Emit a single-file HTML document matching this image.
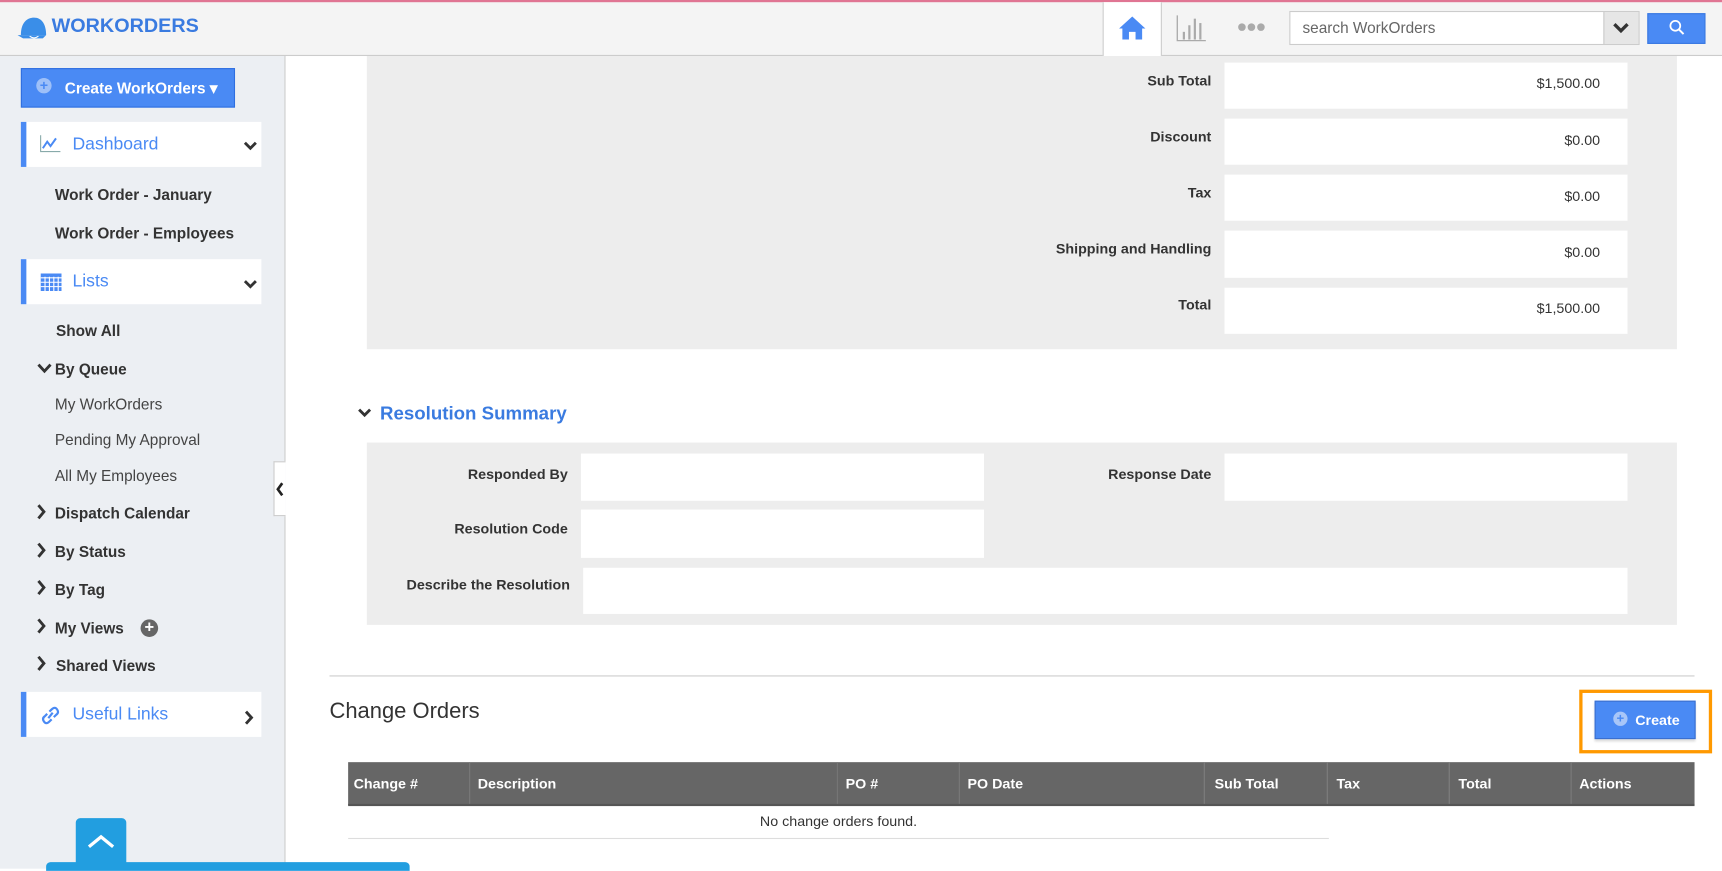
<!DOCTYPE html>
<html><head><meta charset="utf-8"><style>
*{box-sizing:border-box;margin:0;padding:0}
html,body{width:1722px;height:869px;overflow:hidden;background:#fff;font-family:"Liberation Sans",Arial,sans-serif}
#w{position:absolute;left:0;top:0;width:1568px;height:791px;transform:scale(1.09821);transform-origin:0 0}
.a{position:absolute}
.hdr{left:0;top:0;width:1568px;height:51px;background:#f4f4f4;border-top:2px solid #e07593;border-bottom:1px solid #ccc}
.side{left:0;top:51px;width:260px;height:740px;background:#eceff3;border-right:1px solid #ccc}
.nav{left:19px;width:219px;height:41px;background:#fff;border-left:5px solid #4a8af4;color:#4a8af4;font-size:16px}
.nav span{position:absolute;left:42px;top:12px}
.it{left:50px;font-size:14px;font-weight:bold;color:#333}
.it.n{font-weight:normal;color:#444}
.chev{font-size:14px;font-weight:bold;color:#333}
.lbl{font-size:13px;font-weight:bold;color:#333;text-align:right}
.inp{background:#fff}
.val{font-size:13px;color:#333;text-align:right}
.th{top:694px;height:39px;background:#666;color:#fff;font-weight:bold;font-size:13px;padding:12px 0 0 5px;border-right:1px solid #777}
</style></head><body><div id="w">
<div class="a hdr"></div>
<svg class="a" style="left:15px;top:14px" width="30" height="24" viewBox="0 0 30 24"><path d="M4 18 C4 6 10 2 16 2 C23 2 27 8 27 18 Z" fill="#3a8ee8"/><path d="M1 18 L27 18 L24 21 L6 21 Z" fill="#3a8ee8"/><path d="M12 19 q4 3 8 0" stroke="#fff" fill="none"/></svg>
<div class="a" style="left:47px;top:13px;font-size:18px;font-weight:bold;color:#3a7be0">WORKORDERS</div>
<div class="a" style="left:1004px;top:2px;width:54px;height:49px;background:#fff;border-left:1px solid #ccc;border-right:1px solid #ccc"></div>
<svg class="a" style="left:1018px;top:13px" width="26" height="24" viewBox="0 0 26 24"><path d="M13 2 L1 13 L4 13 L4 23 L10 23 L10 16 L16 16 L16 23 L22 23 L22 13 L25 13 Z" fill="#4a8af4"/></svg>
<svg class="a" style="left:1071px;top:13px" width="28" height="25" viewBox="0 0 28 25"><path d="M1 1 V24 H27" stroke="#aaa" fill="none" stroke-width="1.2"/><rect x="6" y="16" width="2" height="7" fill="#aaa"/><rect x="11" y="10" width="2" height="13" fill="#aaa"/><rect x="16" y="4" width="2" height="19" fill="#aaa"/><rect x="21" y="8" width="2" height="15" fill="#aaa"/></svg>
<div class="a" style="left:1126px;top:16px;font-size:16px;color:#aaa;letter-spacing:-1px">●●●</div>
<div class="a" style="left:1174px;top:10px;width:319px;height:31px;background:#fff;border:1px solid #ccc"></div>
<div class="a" style="left:1186px;top:17px;font-size:14px;color:#666">search WorkOrders</div>
<div class="a" style="left:1460px;top:11px;width:32px;height:29px;background:#e6e6e6;border-left:1px solid #ccc;text-align:center;padding-top:5px;font-size:13px;font-weight:bold;color:#333">&#x2335;</div>
<svg class="a" style="left:1468px;top:20px" width="16" height="11" viewBox="0 0 16 11"><path d="M2 2 L8 8 L14 2" stroke="#333" stroke-width="3" fill="none"/></svg>
<div class="a" style="left:1460px;top:11px;width:32px;height:29px;background:#e6e6e6;border-left:1px solid #ccc"></div>
<svg class="a" style="left:1468px;top:20px" width="16" height="11" viewBox="0 0 16 11"><path d="M2 2 L8 8 L14 2" stroke="#333" stroke-width="3" fill="none"/></svg>
<div class="a" style="left:1500px;top:12px;width:53px;height:28px;background:#4a8af4;border:1px solid #3a78e0"></div>
<svg class="a" style="left:1519px;top:17px" width="16" height="16" viewBox="0 0 16 16"><circle cx="6.5" cy="6.5" r="4.5" stroke="#fff" stroke-width="1.6" fill="none"/><path d="M10 10 L14 14" stroke="#fff" stroke-width="1.8"/></svg>

<div class="a side"></div>
<div class="a" style="left:19px;top:62px;width:195px;height:36px;background:#4a8af4;border:1px solid #2f6fe0"></div>
<div class="a" style="left:33px;top:71px;width:14px;height:14px;border-radius:50%;background:#9ec0f8;color:#4a8af4;font-size:13px;font-weight:bold;text-align:center;line-height:14px">+</div>
<div class="a" style="left:59px;top:72px;font-size:14px;font-weight:bold;color:#fff">Create WorkOrders &#9662;</div>

<div class="a nav" style="top:111px"><span>Dashboard</span></div>
<svg class="a" style="left:36px;top:123px" width="20" height="16" viewBox="0 0 20 16"><path d="M1 0 V15 H19" stroke="#8aa" fill="none"/><path d="M3 12 L7 6 L10 10 L15 3" stroke="#4a8af4" stroke-width="1.8" fill="none"/></svg>
<svg class="a" style="left:221px;top:128px" width="14" height="10" viewBox="0 0 14 10"><path d="M2 2 L7 7 L12 2" stroke="#333" stroke-width="2.6" fill="none"/></svg>
<div class="a it" style="top:169px">Work Order - January</div>
<div class="a it" style="top:204px">Work Order - Employees</div>
<div class="a nav" style="top:236px"><span>Lists</span></div>
<svg class="a" style="left:37px;top:249px" width="19" height="16" viewBox="0 0 19 16"><rect width="19" height="16" fill="#4a8af4"/><path d="M0 4H19M0 8H19M0 12H19M4 3V16M8 3V16M12 3V16M16 3V16" stroke="#fff" stroke-width="1"/></svg>
<svg class="a" style="left:221px;top:254px" width="14" height="10" viewBox="0 0 14 10"><path d="M2 2 L7 7 L12 2" stroke="#333" stroke-width="2.6" fill="none"/></svg>
<div class="a it" style="top:293px;left:51px">Show All</div>
<svg class="a" style="left:33px;top:330px" width="15" height="11" viewBox="0 0 15 11"><path d="M2 2 L7.5 8 L13 2" stroke="#333" stroke-width="2.6" fill="none"/></svg>
<div class="a it" style="top:328px">By Queue</div>
<div class="a it n" style="top:360px">My WorkOrders</div>
<div class="a it n" style="top:392px">Pending My Approval</div>
<div class="a it n" style="top:425px">All My Employees</div>
<div class="a it" style="top:459px">Dispatch Calendar</div>
<div class="a it" style="top:494px">By Status</div>
<div class="a it" style="top:529px">By Tag</div>
<div class="a it" style="top:564px">My Views</div>
<div class="a" style="left:128px;top:564px;width:16px;height:16px;border-radius:50%;background:#666;color:#fff;font-size:15px;font-weight:bold;text-align:center;line-height:16px">+</div>
<div class="a it" style="top:598px;left:51px">Shared Views</div>
<svg class="a" style="left:33px;top:459px" width="10" height="160" viewBox="0 0 10 160"><g stroke="#333" stroke-width="2.6" fill="none"><path d="M2 1 L7 7 L2 13"/><path d="M2 36 L7 42 L2 48"/><path d="M2 70 L7 76 L2 82"/><path d="M2 105 L7 111 L2 117"/><path d="M2 139 L7 145 L2 151"/></g></svg>
<div class="a nav" style="top:630px"><span>Useful Links</span></div>
<svg class="a" style="left:37px;top:643px" width="18" height="17" viewBox="0 0 18 17"><g stroke="#4a8af4" stroke-width="2" fill="none"><path d="M8 5 L10 3 Q13 0 15 3 Q17 6 14 8 L12 10"/><path d="M10 12 L8 14 Q5 17 3 14 Q1 11 4 9 L6 7"/><path d="M7 11 L11 6"/></g></svg>
<svg class="a" style="left:222px;top:646px" width="10" height="15" viewBox="0 0 10 15"><path d="M2 2 L7 7.5 L2 13" stroke="#333" stroke-width="2.6" fill="none"/></svg>
<div class="a" style="left:249px;top:420px;width:11px;height:50px;background:#fff;border:1px solid #ccc;border-right:none"></div>
<svg class="a" style="left:251px;top:439px" width="8" height="13" viewBox="0 0 8 13"><path d="M6 1 L2 6.5 L6 12" stroke="#222" stroke-width="2.4" fill="none"/></svg>
<div class="a" style="left:69px;top:745px;width:46px;height:46px;background:#229ee0;border-radius:4px 4px 0 0"></div>
<svg class="a" style="left:78px;top:758px" width="28" height="16" viewBox="0 0 28 16"><path d="M3 13 L14 4 L25 13" stroke="#fff" stroke-width="3" fill="none"/></svg>
<div class="a" style="left:42px;top:785px;width:331px;height:8px;background:#229ee0;border-radius:4px 4px 0 0"></div>

<div class="a" style="left:334px;top:51px;width:1193px;height:267px;background:#ededed"></div>
<div class="a lbl" style="left:900px;width:203px;top:66px">Sub Total</div>
<div class="a lbl" style="left:900px;width:203px;top:117px">Discount</div>
<div class="a lbl" style="left:900px;width:203px;top:168px">Tax</div>
<div class="a lbl" style="left:900px;width:203px;top:219px">Shipping and Handling</div>
<div class="a lbl" style="left:900px;width:203px;top:270px">Total</div>
<div class="a inp" style="left:1115px;top:57px;width:367px;height:42px"></div>
<div class="a inp" style="left:1115px;top:108px;width:367px;height:42px"></div>
<div class="a inp" style="left:1115px;top:159px;width:367px;height:42px"></div>
<div class="a inp" style="left:1115px;top:210px;width:367px;height:43px"></div>
<div class="a inp" style="left:1115px;top:262px;width:367px;height:42px"></div>
<div class="a val" style="left:1250px;width:207px;top:68px">$1,500.00</div>
<div class="a val" style="left:1250px;width:207px;top:120px">$0.00</div>
<div class="a val" style="left:1250px;width:207px;top:171px">$0.00</div>
<div class="a val" style="left:1250px;width:207px;top:222px">$0.00</div>
<div class="a val" style="left:1250px;width:207px;top:273px">$1,500.00</div>

<svg class="a" style="left:325px;top:371px" width="14" height="10" viewBox="0 0 14 10"><path d="M2 2 L7 7 L12 2" stroke="#333" stroke-width="2.6" fill="none"/></svg>
<div class="a" style="left:346px;top:367px;font-size:17px;font-weight:bold;color:#3a7be0">Resolution Summary</div>
<div class="a" style="left:334px;top:403px;width:1193px;height:166px;background:#ededed"></div>
<div class="a lbl" style="left:340px;width:177px;top:424px">Responded By</div>
<div class="a lbl" style="left:900px;width:203px;top:424px">Response Date</div>
<div class="a lbl" style="left:340px;width:177px;top:474px">Resolution Code</div>
<div class="a lbl" style="left:340px;width:179px;top:525px">Describe the Resolution</div>
<div class="a inp" style="left:529px;top:413px;width:367px;height:43px"></div>
<div class="a inp" style="left:1115px;top:413px;width:367px;height:43px"></div>
<div class="a inp" style="left:529px;top:464px;width:367px;height:44px"></div>
<div class="a inp" style="left:531px;top:517px;width:951px;height:42px"></div>

<div class="a" style="left:300px;top:615px;width:1243px;height:1px;background:#ccc"></div>
<div class="a" style="left:300px;top:637px;font-size:20px;color:#333">Change Orders</div>
<div class="a" style="left:1438px;top:628px;width:121px;height:58px;border:3px solid #f90"></div>
<div class="a" style="left:1452px;top:638px;width:92px;height:35px;background:#4a8af4;border:1px solid #3a6fcf;box-shadow:0 2px 2px #ddd"></div>
<div class="a" style="left:1469px;top:648px;width:13px;height:13px;border-radius:50%;background:#a8c6f8;color:#4a8af4;font-size:12px;font-weight:bold;text-align:center;line-height:13px">+</div>
<div class="a" style="left:1489px;top:648px;font-size:13px;font-weight:bold;color:#fff">Create</div>

<div class="a th" style="left:317px;width:111px">Change #</div>
<div class="a th" style="left:428px;width:335px;padding-left:7px">Description</div>
<div class="a th" style="left:763px;width:111px;padding-left:7px">PO #</div>
<div class="a th" style="left:874px;width:223px;padding-left:7px">PO Date</div>
<div class="a th" style="left:1097px;width:112px;padding-left:9px">Sub Total</div>
<div class="a th" style="left:1209px;width:111px;padding-left:8px">Tax</div>
<div class="a th" style="left:1320px;width:111px;padding-left:8px">Total</div>
<div class="a th" style="left:1431px;width:112px;padding-left:7px;border-right:none">Actions</div>
<div class="a" style="left:317px;top:732px;width:1226px;height:2px;background:#555"></div>
<div class="a" style="left:317px;top:740px;width:893px;text-align:center;font-size:13px;color:#333">No change orders found.</div>
<div class="a" style="left:317px;top:763px;width:893px;height:1px;background:#ddd"></div>
</div></body></html>
